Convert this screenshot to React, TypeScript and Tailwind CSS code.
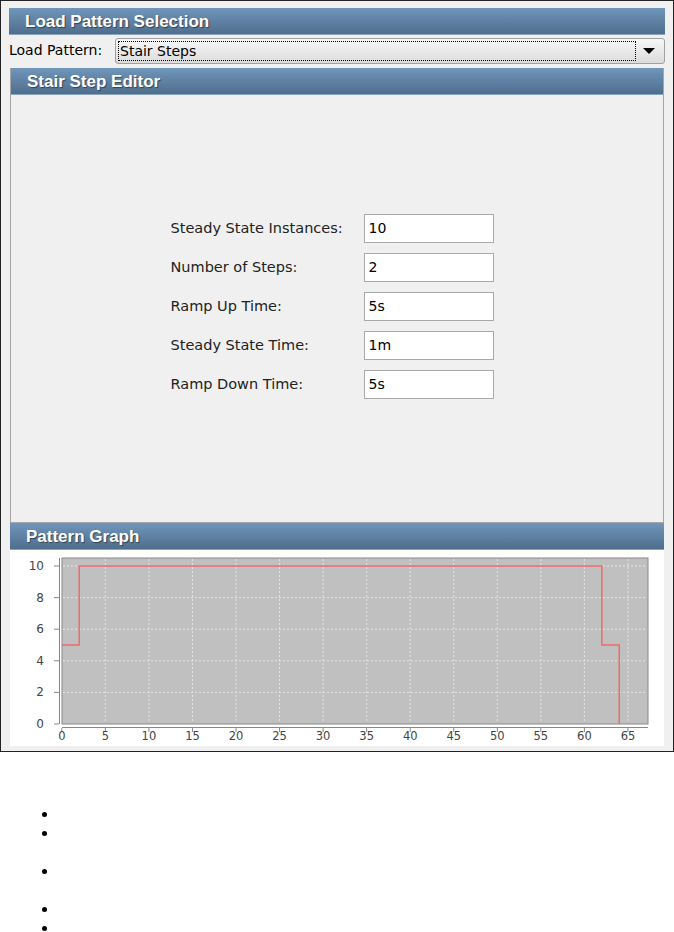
import React from "react";

const font = { fontFamily: '"DejaVu Sans", Tahoma, sans-serif' };

function Header({ title }: { title: string }) {
  return (
    <div className="h-[27px] flex items-center pl-4 pt-[2px] bg-gradient-to-b from-[#7096ba] to-[#4f6e8e] text-white font-bold text-[17px] font-['Liberation_Sans',Arial,sans-serif] [text-shadow:1px_1px_1px_rgba(0,0,0,0.45)] border-b border-[#8aa4bd]">
      {title}
    </div>
  );
}

const fields: [string, string][] = [
  ["Steady State Instances:", "10"],
  ["Number of Steps:", "2"],
  ["Ramp Up Time:", "5s"],
  ["Steady State Time:", "1m"],
  ["Ramp Down Time:", "5s"],
];

function Chart() {
  const xv = (v: number) => 51.8 + 8.71 * v;
  const yv = (v: number) => 174 - 15.8 * v;
  const xs = [0, 5, 10, 15, 20, 25, 30, 35, 40, 45, 50, 55, 60, 65];
  const ys = [0, 2, 4, 6, 8, 10];
  const pts = [
    [0, 5], [2, 5], [2, 10], [62, 10], [62, 5], [64, 5], [64, 0],
  ]
    .map(([a, b]) => `${xv(a)},${yv(b)}`)
    .join(" ");
  return (
    <svg width="654" height="196" className="block">
      <rect x="52" y="8" width="586" height="166" fill="#c0c0c0" stroke="#8a8a8a" />
      {xs.slice(1).map((v) => (
        <line key={"gx" + v} x1={xv(v)} x2={xv(v)} y1="9" y2="173" stroke="#e4e4e4" strokeDasharray="2 2" />
      ))}
      {ys.slice(1).map((v) => (
        <line key={"gy" + v} x1="53" x2="637" y1={yv(v)} y2={yv(v)} stroke="#e4e4e4" strokeDasharray="2 2" />
      ))}
      <polyline points={pts} fill="none" stroke="#f06a6a" strokeWidth="1.5" />
      <line x1="49.5" x2="49.5" y1="8" y2="174" stroke="#888" />
      <line x1="52" x2="638" y1="177.5" y2="177.5" stroke="#888" />
      {ys.map((v) => (
        <g key={"y" + v}>
          <line x1="44" x2="49" y1={yv(v)} y2={yv(v)} stroke="#888" />
          <text x="34" y={yv(v) + 4} textAnchor="end" fontSize="12" fill="#444" style={font}>
            {v}
          </text>
        </g>
      ))}
      {xs.map((v) => (
        <g key={"x" + v}>
          <line x1={xv(v)} x2={xv(v)} y1="178" y2="182" stroke="#888" />
          <text x={xv(v)} y="190" textAnchor="middle" fontSize="11.5" fill="#444" style={font}>
            {v}
          </text>
        </g>
      ))}
    </svg>
  );
}

export default function App() {
  return (
    <div className="bg-white w-[674px] h-[932px]" style={font}>
      <div className="w-[674px] h-[752px] border border-[#222] bg-[#f0f0f0] pt-[7px] px-[8px] flex flex-col">
        <Header title="Load Pattern Selection" />
        <div className="flex items-center h-[31px] text-[14px] text-black">
          <span className="w-[106px] shrink-0">Load Pattern:</span>
          <div className="flex-1 h-[26px] border border-[#a0a0a0] rounded-[3px] bg-gradient-to-b from-[#f7f7f7] to-[#dcdcdc] flex items-center pl-[2px] pr-[2px]">
            <div className="flex-1 h-[20px] border border-dotted border-black flex items-center pl-[1px] leading-none">
              Stair Steps
            </div>
            <div className="w-[26px] flex justify-center">
              <div className="w-0 h-0 border-l-[6px] border-r-[6px] border-t-[6px] border-l-transparent border-r-transparent border-t-black" />
            </div>
          </div>
        </div>
        <div className="mx-[1px] mt-[2px] h-[455px] border border-[#a6a6a6] border-t-0 flex flex-col">
          <Header title="Stair Step Editor" />
          <div className="flex-1 flex items-center justify-center pr-[10px] pb-[4px]">
            <div className="flex flex-col gap-[10px]">
              {fields.map(([l, v]) => (
                <div key={l} className="flex items-center h-[29px]">
                  <span className="w-[193px] text-[14.5px] text-[#222]">{l}</span>
                  <div className="w-[130px] h-[29px] border border-[#a9a9a9] bg-white flex items-center pl-[4px] text-[14px] text-black">
                    {v}
                  </div>
                </div>
              ))}
            </div>
          </div>
        </div>
        <div className="mx-[1px]">
          <Header title="Pattern Graph" />
          <div className="bg-white h-[196px]">
            <Chart />
          </div>
        </div>
      </div>
      <div className="pl-[42px] pt-[60px] flex flex-col">
        {[0, 19, 38, 38, 19].map((m, i) => (
          <div key={i} className="w-[5px] h-[5px] rounded-full bg-black" style={{ marginTop: i === 0 ? 0 : m - 5 }} />
        ))}
      </div>
    </div>
  );
}
